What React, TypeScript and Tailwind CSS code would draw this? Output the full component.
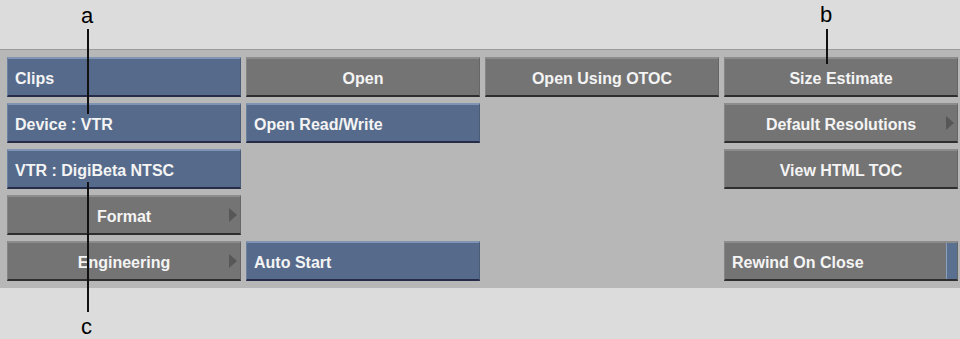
import React from "react";

type Btn = {
  label: string;
  tone: "blue" | "gray";
  align?: "left" | "center";
  arrow?: boolean;
  strip?: boolean;
} | null;

const rows: Btn[][] = [
  [
    { label: "Clips", tone: "blue" },
    { label: "Open", tone: "gray", align: "center" },
    { label: "Open Using OTOC", tone: "gray", align: "center" },
    { label: "Size Estimate", tone: "gray", align: "center" },
  ],
  [
    { label: "Device : VTR", tone: "blue" },
    { label: "Open Read/Write", tone: "blue" },
    null,
    { label: "Default Resolutions", tone: "gray", align: "center", arrow: true },
  ],
  [
    { label: "VTR : DigiBeta NTSC", tone: "blue" },
    null,
    null,
    { label: "View HTML TOC", tone: "gray", align: "center" },
  ],
  [{ label: "Format", tone: "gray", align: "center", arrow: true }, null, null, null],
  [
    { label: "Engineering", tone: "gray", align: "center", arrow: true },
    { label: "Auto Start", tone: "blue" },
    null,
    { label: "Rewind On Close", tone: "gray", strip: true },
  ],
];

function Arrow() {
  return (
    <svg width="8" height="14" viewBox="0 0 8 14" className="absolute right-[3px] top-1/2 -translate-y-1/2">
      <polygon points="0,0 8,7 0,14" fill="#575757" />
    </svg>
  );
}

function Button({ b }: { b: NonNullable<Btn> }) {
  const blue = b.tone === "blue";
  const body = blue
    ? "bg-[#566b8b] border-t-[#7f94b3] border-b-[#262b48] border-l-[#6c80a0] border-r-[#4a5c78]"
    : "bg-[#747474] border-t-[#8c8c8c] border-b-[#2e2e2e] border-l-[#858585] border-r-[#666666]";
  return (
    <div
      className={`relative flex h-[40px] items-stretch border-t-2 border-b-2 border-l border-r ${body}`}
    >
      <div
        className={`flex flex-1 items-center px-[7px] pt-[3px] text-[16px] font-bold text-[#f4f4f4] ${
          b.align === "center" ? "justify-center" : "justify-start"
        }`}
        style={{ fontFamily: '"Liberation Sans", Arial, sans-serif' }}
      >
        {b.label}
      </div>
      {b.arrow && <Arrow />}
      {b.strip && <div className="w-[11px] bg-[#5a7091] border-l border-l-[#8a9fbf]" />}
    </div>
  );
}

export default function App() {
  return (
    <div
      className="relative flex h-[339px] w-[960px] flex-col overflow-hidden bg-[#dcdcdc]"
      style={{ fontFamily: '"Liberation Sans", Arial, sans-serif' }}
    >
      <div className="h-[49px]" />
      <div className="border-t border-t-[#9c9c9c] bg-[#b7b7b7] pt-[7px] pb-[7px] pl-[7px] pr-[2px]">
        <div className="grid grid-cols-[234px_234px_234px_234px] gap-x-[5px] gap-y-[6px]">
          {rows.flat().map((b, i) => (b ? <Button key={i} b={b} /> : <div key={i} className="h-[40px]" />))}
        </div>
      </div>

      {/* callouts */}
      <div className="absolute left-[81px] top-[5px] text-[22px] leading-none text-black">a</div>
      <div className="absolute left-[87px] top-[29px] h-[85px] w-[2px] bg-[#111]" />
      <div className="absolute left-[820px] top-[4px] text-[22px] leading-none text-black">b</div>
      <div className="absolute left-[826px] top-[29px] h-[35px] w-[2px] bg-[#111]" />
      <div className="absolute left-[87px] top-[182px] h-[130px] w-[2px] bg-[#111]" />
      <div className="absolute left-[81px] top-[316px] text-[22px] leading-none text-black">c</div>
    </div>
  );
}
